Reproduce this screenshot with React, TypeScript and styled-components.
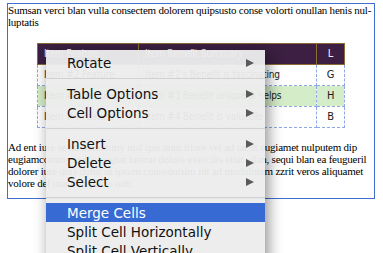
import styled, { createGlobalStyle } from "styled-components";

const GlobalStyle = createGlobalStyle`
  html, body {
    margin: 0;
    padding: 0;
    background: #ffffff;
    overflow: hidden;
  }
`;

const Page = styled.div`
  position: relative;
  width: 383px;
  height: 253px;
  overflow: hidden;
  padding-top: 3px;
  box-sizing: border-box;
`;

const Doc = styled.div`
  margin-left: 7px;
  width: 368px;
  box-sizing: border-box;
  border: 1px solid #3d6fcc;
  padding: 0 3px 8px 0;
`;

const Para = styled.p<{ $top?: number }>`
  margin: ${(p) => p.$top ?? 0}px 0 0 0;
  font-family: "Liberation Serif", serif;
  font-size: 11px;
  letter-spacing: -0.22px;
  line-height: 12.3px;
  color: #000;
  white-space: nowrap;
`;

const Table = styled.table`
  margin: 14px 0 0 29px;
  border-collapse: collapse;
  width: 307px;
  table-layout: fixed;
  font-family: "DejaVu Sans", sans-serif;
  font-stretch: condensed;
  font-size: 10px;
  letter-spacing: -0.2px;
`;

const HeadCell = styled.th<{ $w: number }>`
  width: ${(p) => p.$w}px;
  height: 21px;
  box-sizing: border-box;
  padding: 0 0 0 6px;
  background: #3c1f42;
  border: 1px solid #8b6b33;
  color: #f2eef2;
  font-weight: normal;
  text-align: left;
  white-space: nowrap;
  overflow: hidden;
  &:last-child {
    text-align: center;
    padding: 0;
    font-size: 11px;
  }
`;

const Row = styled.tr<{ $green?: boolean }>`
  background: ${(p) => (p.$green ? "#d4ecc7" : "#ffffff")};
`;

const Cell = styled.td`
  height: 21px;
  box-sizing: border-box;
  padding: 0 0 0 6px;
  border: 1px dashed #8fa8e6;
  color: #1a1a1a;
  white-space: nowrap;
  overflow: hidden;
  &:last-child {
    text-align: center;
    padding: 0;
    font-size: 11px;
  }
`;

const Menu = styled.div`
  position: absolute;
  left: 46px;
  top: 50px;
  width: 219px;
  padding-top: 3px;
  padding-bottom: 20px;
  background: rgba(236, 236, 236, 0.955);
  box-shadow: 3px 4px 14px rgba(0, 0, 0, 0.45);
  font-family: "DejaVu Sans", sans-serif;
  font-size: 13.5px;
`;

const Item = styled.div<{ $active?: boolean }>`
  display: flex;
  align-items: center;
  justify-content: space-between;
  height: 19px;
  padding: 0 11px 0 21px;
  background: ${(p) => (p.$active ? "#376bd3" : "transparent")};
  color: ${(p) => (p.$active ? "#ffffff" : "#111111")};
`;

const Arrow = styled.span`
  width: 0;
  height: 0;
  border-top: 4.5px solid transparent;
  border-bottom: 4.5px solid transparent;
  border-left: 8px solid #5a5a5a;
`;

const Separator = styled.div`
  height: 12px;
  display: flex;
  align-items: center;
  &::after {
    content: "";
    flex: 1;
    height: 1px;
    background: #d2d2d2;
  }
`;

type Entry = { label: string; sub?: boolean; active?: boolean } | "sep";

const entries: Entry[] = [
  { label: "Rotate", sub: true },
  "sep",
  { label: "Table Options", sub: true },
  { label: "Cell Options", sub: true },
  "sep",
  { label: "Insert", sub: true },
  { label: "Delete", sub: true },
  { label: "Select", sub: true },
  "sep",
  { label: "Merge Cells", active: true },
  { label: "Split Cell Horizontally" },
  { label: "Split Cell Vertically" },
];

const rows = [
  { a: "Item #2 Feature", b: "Item #2's Benefit is fascinating", c: "G" },
  { a: "Item #3 Feature", b: "Item #3 Benefit unique & helps", c: "H", green: true },
  { a: "Item #4 Feature", b: "Item #4 Benefit is valuable", c: "B" },
];

export default function App() {
  return (
    <Page>
      <GlobalStyle />
      <Doc>
        <Para>
          Sumsan verci blan vulla consectem dolorem quipsusto conse volorti onullan henis nul-
          <br />
          luptatis
        </Para>

        <Table>
          <thead>
            <tr>
              <HeadCell $w={101}>Item Feature</HeadCell>
              <HeadCell $w={178}>Item Benefit Summary</HeadCell>
              <HeadCell $w={28}>L</HeadCell>
            </tr>
          </thead>
          <tbody>
            {rows.map((r) => (
              <Row key={r.c} $green={r.green}>
                <Cell>{r.a}</Cell>
                <Cell>{r.b}</Cell>
                <Cell>{r.c}</Cell>
              </Row>
            ))}
          </tbody>
        </Table>

        <Para $top={13}>
          Ad ent iure se tat nonummy nisl ipis num iriure vel ad tat ut eugiamet nulputem dip
          <br />
          eugiamcommy nulla feugiat iurerat dolore exercilis etiat ullan, sequi blan ea feugueril
          <br />
          dolorer iure quis dolor ut ipsum consequisim nit ad modolorem zzrit veros aliquamet
          <br />
          volore del utat veliquatio odit.
        </Para>
      </Doc>

      <Menu>
        {entries.map((e, i) =>
          e === "sep" ? (
            <Separator key={i} />
          ) : (
            <Item key={i} $active={e.active}>
              <span>{e.label}</span>
              {e.sub && <Arrow />}
            </Item>
          )
        )}
      </Menu>
    </Page>
  );
}
